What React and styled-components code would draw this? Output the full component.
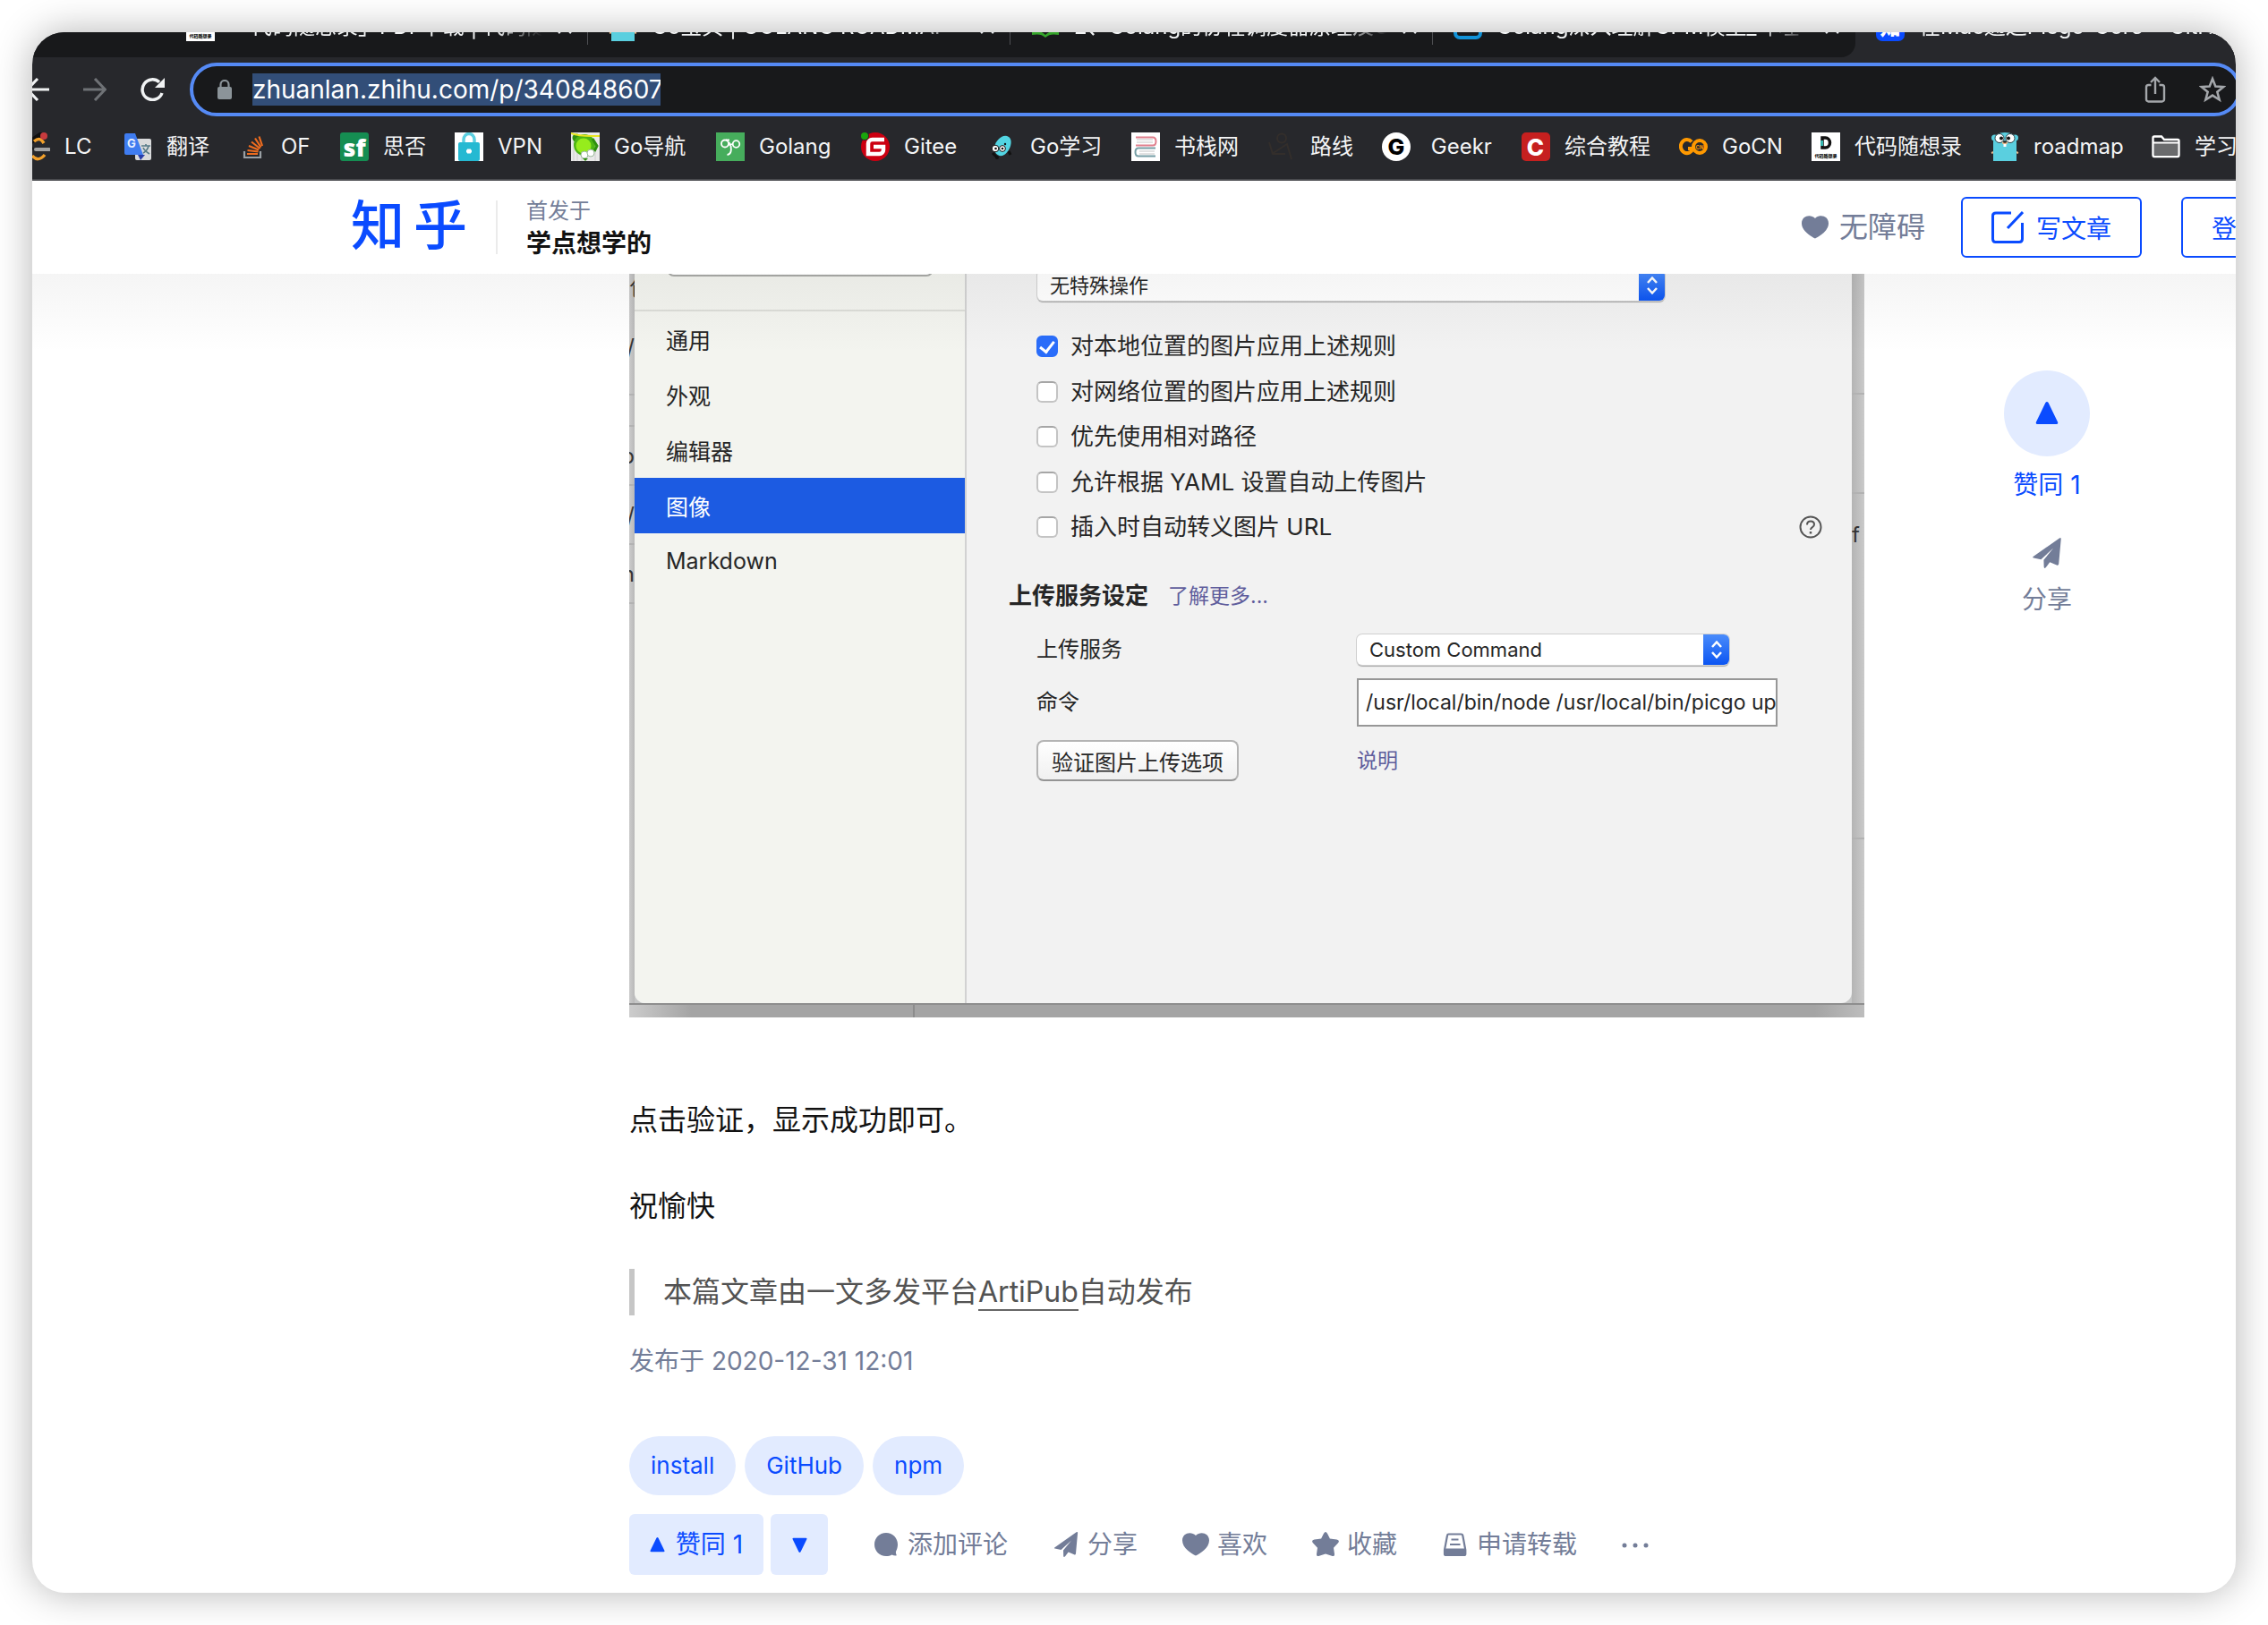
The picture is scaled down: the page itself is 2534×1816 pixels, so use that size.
import React from "react";
import styled, { createGlobalStyle, css } from "styled-components";

const FONT = `Inter, "Noto Sans CJK SC", sans-serif`;
const BLUE = "#0a4bff";
const PALE = "#e2ebff";
const SLATE = "#737d98";

const GlobalStyle = createGlobalStyle`
  * { box-sizing: border-box; }
  body { margin: 0; background: #fff; font-family: ${FONT}; color: #121212; }
  button, input, select { font-family: inherit; margin: 0; }
  p, h3, figure, blockquote, ul { margin: 0; padding: 0; }
  svg { display: block; flex: none; }
`;

const bareButton = css`
  border: 0;
  padding: 0;
  background: none;
  color: inherit;
  display: flex;
  align-items: center;
`;

const Page = styled.div`
  padding: 36px;
  min-height: 100vh;
  overflow: hidden;
`;

const Window = styled.div`
  min-height: calc(100vh - 72px);
  border-radius: 36px;
  overflow: hidden;
  background: #fff;
  box-shadow: 0 0 44px rgba(0, 0, 0, 0.3);
`;

/* ---------- browser chrome ---------- */

const Chrome = styled.div`
  background: #27282c;
  border-bottom: 2px solid #4a4b4f;
`;

const TabStrip = styled.div`
  display: flex;
  align-items: flex-end;
  height: 28px;
  padding-left: 149px;
  overflow: hidden;
  background: linear-gradient(90deg, #18191b 80%, #27282c 80%);
`;

const Tab = styled.div`
  flex: none;
  display: flex;
  align-items: center;
  gap: 16px;
  width: 472px;
  height: 68px;
  padding: 0 22px 0 23px;
  background: ${(p) => (p.$active ? "#27282c" : "#18191b")};
  border-bottom-right-radius: ${(p) => (p.$last ? "16px" : "0")};
`;

const TabTitle = styled.span`
  flex: 1;
  min-width: 0;
  overflow: hidden;
  white-space: nowrap;
  font-size: 24px;
  line-height: 32px;
  color: #f1f3f4;
  -webkit-mask-image: linear-gradient(90deg, #000 85%, transparent 100%);
  mask-image: linear-gradient(90deg, #000 85%, transparent 100%);
`;

const TabRule = styled.span`
  flex: none;
  width: 2px;
  height: 40px;
  margin-right: -23px;
  background: ${(p) => (p.$hidden ? "transparent" : "#4d4e52")};
`;

const Toolbar = styled.div`
  display: flex;
  align-items: center;
  height: 66px;
  padding: 6px 0 0 57px;
  margin-right: -6px;
`;

const NavButton = styled.button`
  ${bareButton}
  flex: none;
  width: 26px;
  margin-right: ${(p) => p.$after || 0}px;
  color: ${(p) => (p.$dim ? "#6f7276" : "#f1f3f4")};
`;

const BackButton = styled(NavButton)`
  margin-left: -64px;
  margin-right: 38px;
`;

const Omnibox = styled.div`
  flex: 1;
  display: flex;
  align-items: center;
  height: 60px;
  border: 4px solid #558af5;
  border-radius: 30px;
  background: #18191b;
  padding: 0 13px 0 26px;
  color: #a4a7ab;
`;

const UrlInput = styled.input`
  width: 456px;
  height: 36px;
  margin: 0 auto 0 22px;
  border: 0;
  padding: 0;
  outline: 0;
  background: #324e78;
  color: #fff;
  font-size: 28px;
  line-height: 36px;
`;

const OmniButton = styled.button`
  ${bareButton}
  margin-left: 37px;
`;

const Bookmarks = styled.nav`
  display: flex;
  gap: 32px;
  height: 70px;
  margin-left: -12px;
  padding-top: 18px;
  overflow: hidden;
`;

const Bookmark = styled.a`
  flex: none;
  display: flex;
  gap: 16px;
  height: 32px;
  width: ${(p) => p.$w}px;
  color: #f4f5f6;
  font-size: 24px;
  line-height: 32px;
  white-space: pre;
  text-decoration: none;
`;

/* ---------- site header ---------- */

const SiteHeader = styled.header`
  position: relative;
  display: flex;
  align-items: center;
  height: 104px;
  padding-left: 356px;
  background: #fff;
  white-space: nowrap;

  &::after {
    content: "";
    position: absolute;
    z-index: 2;
    left: 0;
    right: 0;
    top: 104px;
    height: 88px;
    background: linear-gradient(rgba(18, 18, 18, 0.045), rgba(18, 18, 18, 0));
    pointer-events: none;
  }
`;

const Logo = styled.a`
  display: flex;
  gap: 10px;
  padding-bottom: 12px;
  color: ${BLUE};
  font-family: "Noto Sans CJK SC", sans-serif;
  font-size: 60px;
  font-weight: 500;
  line-height: 80px;
  text-decoration: none;
`;

const Column = styled.div`
  margin-left: 32px;
  padding-left: 32px;
  border-left: 2px solid #ebebeb;
  height: 60px;
  display: flex;
  flex-direction: column;
  justify-content: center;
`;

const ColumnNote = styled.span`
  font-size: 24px;
  line-height: 36px;
  color: ${SLATE};
`;

const ColumnName = styled.a`
  font-size: 28px;
  font-weight: 700;
  line-height: 36px;
  color: #121212;
  text-decoration: none;
`;

const HeaderActions = styled.div`
  display: flex;
  align-items: center;
  margin-left: auto;
  margin-right: -136px;
`;

const AccessLink = styled.a`
  display: flex;
  align-items: center;
  gap: 12px;
  margin-right: 40px;
  font-size: 32px;
  line-height: 48px;
  color: ${SLATE};
  text-decoration: none;
`;

const OutlineButton = styled.button`
  ${bareButton}
  gap: 14px;
  height: 68px;
  padding: 0 32px;
  margin-right: ${(p) => p.$after || 0}px;
  border: 2px solid ${BLUE};
  border-radius: 6px;
  color: ${BLUE};
  font-size: 28px;
  width: ${(p) => p.$w}px;
`;

/* ---------- article ---------- */

const Body = styled.main`
  display: flex;
  align-items: flex-start;
  padding: 0 0 20px 667px;
`;

const Article = styled.article`
  flex: 0 1 1380px;
  min-width: 0;
`;

const Shot = styled.figure`
  display: grid;
  grid-template-columns: 6px 1fr 14px;
  grid-template-rows: 815px 16px;
  background: #c6c7c7;
  margin-bottom: 89px;
`;

const Strip = styled.div`
  display: flex;
  flex-direction: column;
  overflow: hidden;
  font-size: 24px;
  white-space: nowrap;
  color: #333;
  background: linear-gradient(90deg, ${(p) => (p.$right ? "#b4b4b4, #cacaca" : "#cbcbcb, #b9b9b9")});
`;

const StripCell = styled.span`
  flex: none;
  display: flex;
  align-items: center;
  justify-content: ${(p) => (p.$end ? "flex-end" : "flex-start")};
  height: ${(p) => p.$h}px;
  border-bottom: ${(p) => (p.$line ? "2px solid #b2b2b2" : "0")};
`;

const ShotFoot = styled.div`
  grid-column: 1 / -1;
  display: flex;
  background: linear-gradient(90deg, #cccccc, #a4a4a4 5%, #a4a4a4 96%, #bdbdbd);
  border-top: 2px solid #8e8e8e;

  &::before {
    content: "";
    width: 2px;
    margin-left: 317px;
    background: #8c8c8c;
  }
`;

const Dialog = styled.section`
  display: flex;
  overflow: hidden;
  border-radius: 0 0 12px 12px;
  background: #f2f2f2;
  color: #262626;
`;

const Sidebar = styled.div`
  flex: none;
  width: 371px;
  background: #f3f4ef;
  border-right: 2px solid #d2d2d2;
`;

const SearchArea = styled.div`
  display: flex;
  align-items: flex-end;
  height: 42px;
  padding: 0 36px 37px;
  border-bottom: 2px solid #dcddd8;
`;

const SearchInput = styled.input`
  flex: none;
  width: 298px;
  height: 40px;
  border: 2px solid #a9aaa7;
  border-radius: 8px;
  background: #fff;
`;

const MenuItem = styled.button`
  ${bareButton}
  width: 100%;
  height: 62px;
  padding-left: 35px;
  font-size: 25px;
  background: ${(p) => (p.$on ? "#1c5be2" : "transparent")};
  color: ${(p) => (p.$on ? "#fff" : "#262626")};
`;

const Panel = styled.div`
  flex: 1;
  min-width: 0;
  padding-left: 47px;
`;

const SelectBox = styled.div`
  display: flex;
  width: ${(p) => p.$w}px;
  height: 34px;
  border-radius: 6px;
  overflow: hidden;
  background: #fff;
  box-shadow: 0 0 0 1px #d0d0d0, 0 2px 1px #a8a8a8;
`;

const FirstSelect = styled(SelectBox)`
  margin: -4px 0 33px 32px;
`;

const NativeSelect = styled.select`
  appearance: none;
  flex: 1;
  min-width: 0;
  border: 0;
  padding: 0 14px;
  background: transparent;
  color: #262626;
  font-size: 22px;
  line-height: 34px;
`;

const Stepper = styled.span`
  flex: none;
  display: flex;
  align-items: center;
  justify-content: center;
  width: 29px;
  color: #fff;
  background: linear-gradient(#4a8cfb, #0c55f2);
`;

const Options = styled.div`
  display: flex;
  flex-direction: column;
  justify-content: space-between;
  height: 238px;
  margin: 0 33px 41px 31px;
`;

const OptionRow = styled.div`
  display: flex;
  align-items: center;
  height: 36px;
  font-size: 26px;
  line-height: 36px;

  svg { margin-left: auto; }
`;

const Check = styled.input`
  appearance: none;
  display: flex;
  justify-content: center;
  width: 24px;
  height: 24px;
  margin-right: 14px;
  border: 2px solid #c4c4c4;
  border-top-color: #a6a6a6;
  border-radius: 6px;
  background: #fff;

  &:checked { background: #2a6dfa; border-color: #2a6dfa; }
  &:checked::after {
    content: "";
    width: 7px;
    height: 13px;
    margin-top: 1px;
    border: solid #fff;
    border-width: 0 3px 3px 0;
    transform: rotate(38deg);
  }
`;

const SectionHead = styled.div`
  display: flex;
  align-items: center;
  gap: 22px;
  height: 36px;
  margin-bottom: 25px;
`;

const SectionTitle = styled.h3`
  font-size: 26px;
  line-height: 36px;
  font-weight: 700;
`;

const TextLink = styled.a`
  color: #5f5d9c;
  font-size: 23px;
  line-height: 36px;
  text-decoration: none;
`;

const Fields = styled.div`
  display: grid;
  grid-template-columns: 358px auto;
  row-gap: 15px;
  align-items: center;
  justify-content: start;
  margin-left: 31px;
  font-size: 24px;
`;

const FieldLabel = styled.label`
  line-height: 32px;
`;

const CommandInput = styled.input`
  width: 470px;
  height: 54px;
  padding: 0 0 0 8px;
  border: 2px solid #979797;
  background: #fff;
  color: #262626;
  font-size: 23px;
`;

const VerifyButton = styled.button`
  justify-self: start;
  height: 46px;
  padding: 0 15px;
  border: 2px solid #b4b4b4;
  border-bottom-color: #949494;
  border-radius: 8px;
  background: linear-gradient(#fff, #f0f0f0);
  color: #262626;
  font-size: 24px;
`;

const Para = styled.p`
  margin-bottom: 44px;
  font-size: 32px;
  line-height: 52px;
`;

const Quote = styled.blockquote`
  margin-bottom: 32px;
  padding-left: 32px;
  border-left: 6px solid #c6c6c6;
  color: #535353;
  font-size: 32px;
  line-height: 52px;

  a {
    color: inherit;
    text-decoration: none;
    border-bottom: 2px solid #666;
  }
`;

const PublishDate = styled.p`
  margin-bottom: 65px;
  color: ${SLATE};
  font-size: 28px;
  line-height: 38px;
`;

const Tags = styled.div`
  display: flex;
  gap: 10px;
  margin-bottom: 21px;
`;

const Tag = styled.a`
  padding: 0 24px;
  border-radius: 33px;
  background: ${PALE};
  color: ${BLUE};
  font-size: 26px;
  line-height: 66px;
  text-decoration: none;
`;

const Actions = styled.div`
  display: flex;
  align-items: center;
  gap: 50px;
  height: 68px;
  white-space: nowrap;
`;

const Votes = styled.div`
  display: flex;
  gap: 8px;
`;

const VoteButton = styled.button`
  ${bareButton}
  justify-content: center;
  gap: 12px;
  width: ${(p) => p.$w}px;
  height: 68px;
  border-radius: 6px;
  background: ${PALE};
  color: ${BLUE};
  font-size: 28px;
  line-height: 40px;
`;

const ActionButton = styled.button`
  ${bareButton}
  gap: 9px;
  color: ${SLATE};
  font-size: 28px;
  line-height: 40px;
`;

const SideBar = styled.aside`
  flex: none;
  display: flex;
  flex-direction: column;
  align-items: center;
  gap: 38px;
  margin-left: 144px;
  padding-top: 108px;
  width: 120px;
`;

const SideButton = styled.button`
  ${bareButton}
  flex-direction: column;
  gap: ${(p) => p.$gap}px;
  color: ${(p) => (p.$accent ? BLUE : SLATE)};
  font-size: 28px;
  line-height: 40px;
`;

const Round = styled.span`
  display: flex;
  align-items: center;
  justify-content: center;
  width: 96px;
  height: 96px;
  border-radius: 50%;
  background: ${PALE};
`;

/* ---------- icons ---------- */

const Svg = ({ s = 32, w, h, vb = "0 0 32 32", children, ...rest }) => (
  <svg width={w || s} height={h || s} viewBox={vb} fill="none" aria-hidden="true" {...rest}>
    {children}
  </svg>
);

const ArrowIcon = ({ back }) => (
  <Svg s={26} vb="0 0 26 26" stroke="currentColor" strokeWidth="3">
    {back ? <path d="M26 13H2M13 1L1.500 13L13 25" /> : <path d="M0 13H24M13 1L24.500 13L13 25" />}
  </Svg>
);

const ReloadIcon = () => (
  <Svg w={28} h={26} vb="0 0 28 26">
    <path d="M24 17A11.300 11.300 0 1 1 21 4.800" stroke="currentColor" strokeWidth="3.500" />
    <path d="M27 0V11H16Z" fill="currentColor" />
  </Svg>
);

const LockIcon = () => (
  <Svg w={18} h={22} vb="0 0 18 22">
    <rect x="1" y="8" width="16" height="14" rx="2" fill="#8b9499" />
    <path d="M4.500 9V5.500a4.500 4.500 0 0 1 9 0V9" stroke="#8b9499" strokeWidth="2.200" />
  </Svg>
);

const ShareBoxIcon = () => (
  <Svg w={24} h={30} vb="0 0 24 30" stroke="currentColor" strokeWidth="2.400">
    <path d="M7.500 10H4.500a2.500 2.500 0 0 0-2.500 2.500V26a2.500 2.500 0 0 0 2.500 2.500h15A2.500 2.500 0 0 0 22 26V12.500a2.500 2.500 0 0 0-2.500-2.500h-3M12 20V2.500M7 7l5-5 5 5" />
  </Svg>
);

const StarOutline = () => (
  <Svg s={30} vb="0 0 30 30">
    <path d="M15 3l3.300 8.500 9 .5-7 5.700 2.400 8.800L15 21.600 7.300 26.500l2.400-8.800-7-5.700 9-.5z" stroke="currentColor" strokeWidth="2.500" />
  </Svg>
);

const CloseIcon = () => (
  <Svg s={18} vb="0 0 18 18" stroke="#e8eaed" strokeWidth="2.500">
    <path d="M2 2l14 14M16 2L2 16" />
  </Svg>
);

const Gopher = () => (
  <Svg>
    <path d="M1 23l5-2M31 23l-5-2" stroke="#e9b98a" strokeWidth="2" />
    <circle cx="4.500" cy="6" r="3.500" fill="#5acfdf" />
    <circle cx="27.500" cy="6" r="3.500" fill="#5acfdf" />
    <path d="M3 32V11C3 3 9 0 16 0s13 3 13 11v21z" fill="#5acfdf" />
    <circle cx="10" cy="6.500" r="5" fill="#fff" stroke="#2b3f45" />
    <circle cx="22" cy="6.500" r="5" fill="#fff" stroke="#2b3f45" />
    <circle cx="12" cy="6.500" r="2" fill="#111" />
    <circle cx="20" cy="6.500" r="2" fill="#111" />
    <ellipse cx="16" cy="11.500" rx="3" ry="2" fill="#e9b98a" />
    <path d="M14.500 13h3v3h-3z" fill="#fff" />
    <ellipse cx="16" cy="10.500" rx="2" ry="1.200" fill="#222" />
  </Svg>
);

const iconText = { fontFamily: "Inter, sans-serif", fontWeight: 700 };
const cjkText = { fontFamily: '"Noto Sans CJK SC", sans-serif', fontWeight: 900 };

const CodeCard = () => (
  <Svg>
    <path fill="#fff" d="M0 0h32v32H0z" />
    <path d="M12 6h3.500a5 5.500 0 0 1 0 11H12z" stroke="#111" strokeWidth="3.500" />
    <path d="M10 9h3v6h-3z" fill="#35b6b0" />
    <text x="16" y="28" fontSize="5" textAnchor="middle" fill="#111" style={cjkText}>代码随想录</text>
  </Svg>
);

const LeetCode = () => (
  <Svg>
    <path d="M12 20L5 14 24 1" stroke="#101010" strokeWidth="6" />
    <path d="M14 10c5-4 8-3 11 2M12 26c4 5 9 5 14-1" stroke="#f2a02b" strokeWidth="3.500" />
    <path d="M16 19h15" stroke="#a3a3a3" strokeWidth="4" strokeLinecap="round" />
    <circle cx="25" cy="4" r="4" fill="#c73b3e" />
  </Svg>
);

const Translate = () => (
  <Svg>
    <rect x="13" y="7" width="18" height="24" rx="2" fill="#d9dadb" />
    <path d="M16 25h8l-5 6z" fill="#2a3ea8" />
    <path d="M1 3a2 2 0 0 1 2-2h10l9 24H3a2 2 0 0 1-2-2z" fill="#3f7cf0" />
    <text x="4" y="17" fontSize="13" fill="#e8f0ff" style={iconText}>G</text>
    <path d="M20 15h10M25 13v2M28 15c-1 4-4 7-6 8M22 17c1 3 4 5 7 7" stroke="#557a86" strokeWidth="1.600" />
  </Svg>
);

const StackIcon = () => (
  <Svg>
    <path d="M7 21v7h18v-7" stroke="#9aa0a5" strokeWidth="2.200" />
    <path d="M10 24h12M10.500 20l12 1.500M12 15l11 4.500M15 10.500l9.500 7.500M19 6.500l6.500 10M23.500 4.500L27 15" stroke="#ee6c1f" strokeWidth="2.200" />
  </Svg>
);

const SfIcon = () => (
  <Svg>
    <rect width="32" height="32" rx="3" fill="#158d52" />
    <text x="16" y="27" fontSize="27" textAnchor="middle" fill="#fff" style={{ fontFamily: '"Open Sans", sans-serif', fontWeight: 800 }}>sf</text>
  </Svg>
);

const VpnIcon = () => (
  <Svg>
    <path fill="#fff" d="M0 0h32v32H0z" />
    <path d="M10 12V8a6 6.500 0 0 1 12 0v4" stroke="#5ccfe0" strokeWidth="3.500" />
    <rect x="4" y="11" width="24" height="21" rx="2" fill="#25b9d2" />
    <path d="M14 18.500h4v5h-4zM13 19.500h6v3h-6z" fill="#fff" />
  </Svg>
);

const FrogIcon = () => (
  <Svg>
    <path fill="#e9e9e9" d="M0 0h32v32H0z" />
    <path d="M7 18v14M12 18v14M27 18v14M3 10v22" stroke="#cfcfcf" />
    <circle cx="6" cy="6" r="4.500" fill="#2f8f10" />
    <circle cx="15" cy="14" r="12" fill="#4db514" />
    <circle cx="14" cy="15" r="8.500" fill="#96ec1c" />
    <path d="M0 1c10 4 20 3 32 3" stroke="#e8e51f" strokeWidth="2" />
    <path d="M24 7l5 8-3 6" stroke="#2f8f10" strokeWidth="3" />
    <circle cx="15" cy="25" r="4" fill="#fff" stroke="#9bb89b" />
    <circle cx="22" cy="23" r="4" fill="#fff" stroke="#9bb89b" />
    <path d="M13 29h6l-3 3z" fill="#2f8f10" />
  </Svg>
);

const GoGreen = () => (
  <Svg>
    <path fill="#46ad5c" d="M0 0h32v32H0z" />
    <circle cx="10" cy="12.500" r="4" stroke="#fff" strokeWidth="1.800" />
    <circle cx="22.500" cy="13" r="3.800" stroke="#fff" strokeWidth="1.800" />
    <path d="M11 8.500h4M14.500 11c3 4 4 13-2 14M14 14l4-1" stroke="#fff" strokeWidth="1.800" />
  </Svg>
);

const GiteeIcon = () => (
  <Svg>
    <circle cx="16" cy="16" r="16" fill="#cc0011" />
    <path d="M26 8H12.500a4.500 4.500 0 0 0-4.500 4.500V24h12.500a4.500 4.500 0 0 0 4.500-4.500V16H14" stroke="#fff" strokeWidth="4.500" />
    <circle cx="4" cy="4" r="5" fill="#27282c" />
    <circle cx="4" cy="4" r="4" fill="#1aa50d" />
  </Svg>
);

const GopherBlob = () => (
  <Svg>
    <path d="M8 16C10 8 18 1 24 5c6 4 1 18-7 21-6 1-10-4-9-10z" fill="#52d5e3" />
    <circle cx="9" cy="18" r="3.800" fill="#fff" stroke="#111" />
    <circle cx="17" cy="18" r="3.400" fill="#fff" stroke="#111" />
    <circle cx="9.500" cy="18" r="1.300" fill="#111" />
    <circle cx="17" cy="18" r="1.300" fill="#111" />
    <circle cx="20" cy="13" r="1.200" fill="#111" />
    <path d="M6 23l5 5M24 21l2 4" stroke="#111" strokeWidth="3" />
    <circle cx="11" cy="28" r="2" fill="#111" />
  </Svg>
);

const BooksIcon = () => (
  <Svg>
    <path fill="#fff" d="M0 0h32v32H0z" />
    <path d="M6 8h18M6 11h18M9 21h17M9 24h17" stroke="#e2e2e2" strokeWidth="2" />
    <path d="M5 5.500h19q3.500 0 3.500 4.500t-3.500 4.500H5" stroke="#e0808d" strokeWidth="2" />
    <path d="M27 17.500H8q-3.500 0-3.500 4.500T8 26.500h19" stroke="#769ea5" strokeWidth="2" />
  </Svg>
);

const RouteIcon = () => (
  <Svg stroke="#332e2b" strokeWidth="2">
    <circle cx="16" cy="6.500" r="5" />
    <path d="M2 11l4 13h14M5 24l17-11 5 17" />
  </Svg>
);

const LetterDisc = () => (
  <Svg>
    <circle cx="16" cy="16" r="16" fill="#fff" />
    <text x="16" y="25" fontSize="25" textAnchor="middle" fill="#000" style={{ ...iconText, fontWeight: 800 }}>G</text>
  </Svg>
);

const LetterSquare = () => (
  <Svg>
    <rect width="32" height="32" rx="5" fill="#c6201f" />
    <text x="15.500" y="25.500" fontSize="26" textAnchor="middle" fill="#fff" style={{ ...iconText, fontWeight: 800 }}>C</text>
  </Svg>
);

const GoCnIcon = () => (
  <Svg>
    <path d="M14 10.500A7 7.500 0 1 0 15.500 18H10" stroke="#f90" strokeWidth="4" />
    <circle cx="23" cy="16" r="7" stroke="#f90" strokeWidth="4" />
    <text x="23" y="18.500" fontSize="6" textAnchor="middle" fill="#f90" style={iconText}>CN</text>
  </Svg>
);

const FolderIcon = () => (
  <Svg>
    <path d="M1.500 25V6q0-1.500 1.500-1.500h8l3 3.500h15q1.500 0 1.500 1.500V25q0 2-1.500 2H3q-1.500 0-1.500-2z" stroke="#fff" strokeWidth="2.400" />
    <path d="M3 12h26v13H3z" fill="#6a6b6d" />
    <path d="M2 11.500h28" stroke="#fff" strokeWidth="2" />
  </Svg>
);

const GreenBook = () => (
  <Svg>
    <path d="M1 21c6-1 11 0 15 4 4-4 9-5 15-4v4c-6-1-11-1-15 3-4-4-9-4-15-3z" fill="#35a52b" />
  </Svg>
);

const TvIcon = () => (
  <Svg>
    <rect x="2" y="6" width="28" height="22" rx="5" stroke="#1293d8" strokeWidth="4" />
  </Svg>
);

const ZhiIcon = () => (
  <Svg>
    <rect width="32" height="32" rx="7" fill="#0a4bff" />
    <text x="16" y="25" fontSize="23" textAnchor="middle" fill="#fff" style={cjkText}>知</text>
  </Svg>
);

const HeartIcon = ({ s = 30 }) => (
  <Svg s={s} vb="0 0 30 30">
    <path d="M15 27.500C10 25 0 19 0 10.500 0 2 10 0 15 5c5-5 15-3 15 5.500C30 19 20 25 15 27.500z" fill="currentColor" />
  </Svg>
);

const StarIcon = () => (
  <Svg s={30} vb="0 0 30 30">
    <path d="M13 2.800q2-3.600 4 0l2.900 5.700 7.600 1.100q3.800.8 1.600 3.600L24 18.800l1 7q.2 3-3 2L15 25.500 8 27.800q-3.200 1-3-2l1-7-5.100-5.600q-2.200-2.800 1.600-3.600l7.600-1.100z" fill="currentColor" />
  </Svg>
);

const CommentIcon = () => (
  <Svg s={30} vb="0 0 30 30">
    <path d="M15 2C7.500 2 2 7.700 2 15s5.500 13 13 13c2.500 0 4.600-.6 6.500-1.600 1.600.9 3.600 1.200 5.500.9-.9-1.500-1.300-3-1-4.600 1.300-2.200 2-4.800 2-7.700C28 7.700 22.500 2 15 2z" fill="currentColor" />
  </Svg>
);

const PlaneIcon = ({ s = 30 }) => (
  <Svg s={s} vb="0 0 30 30">
    <path d="M2.200 18.400L26.600 1.200q1.600-.9 1.500.9L26 25.300q-.3 1.700-1.900 1l-6.400-2.800-3.800 5.100q-1.500 1.200-1.700-.6l-.2-6.500L21 10.500 9.500 21l-6.900-1.400q-1.200-.4-.4-1.200z" fill="currentColor" />
  </Svg>
);

const RequestIcon = () => (
  <Svg s={30} vb="0 0 30 30">
    <path d="M7.500 3.500h14q1.500 0 1.800 1.500l3 16v4.500q0 1.500-1.500 1.500H4.500Q3 27 3 25.500V21L6 5q.2-1.500 1.500-1.500z" stroke="currentColor" strokeWidth="2.200" />
    <path d="M3 19.500h23.300V27H3z" fill="currentColor" />
    <path d="M10.500 9.500h8M9 15h11.500" stroke="currentColor" strokeWidth="2" />
  </Svg>
);

const DotsIcon = () => (
  <Svg s={30} vb="0 0 30 30">
    <circle cx="3" cy="16" r="2.500" fill="currentColor" />
    <circle cx="15" cy="16" r="2.500" fill="currentColor" />
    <circle cx="27" cy="16" r="2.500" fill="currentColor" />
  </Svg>
);

const Triangle = ({ s = 17, down }) => (
  <Svg s={s} vb="0 0 26 26">
    <path
      d={down ? "M11.400 25L1 3.500Q0 1 2.500 1h21Q26 1 25 3.500L14.600 25q-1.600 2-3.200 0z" : "M11.400 1L1 22.500Q0 25 2.500 25h21q2.500 0 1.500-2.500L14.600 1q-1.600-2-3.200 0z"}
      fill="currentColor"
    />
  </Svg>
);

const WriteIcon = () => (
  <Svg s={36} vb="0 0 36 36" stroke="currentColor" strokeWidth="3">
    <path d="M22 2H5Q1.500 2 1.500 5v26q0 3.500 3 3.500H31q3.500 0 3.500-3.500V13M35 1L18 19" />
  </Svg>
);

const HelpIcon = () => (
  <Svg s={26} vb="0 0 26 26" stroke="#555" strokeWidth="2">
    <circle cx="13" cy="13" r="11.500" />
    <path d="M9 10.500Q9 6.500 13 6.500t4 3.500q0 2-2 3.200T13 16" />
    <path d="M13 18v2.500" strokeWidth="2.500" />
  </Svg>
);

const UpDown = () => (
  <Svg w={16} h={22} vb="0 0 16 22" stroke="currentColor" strokeWidth="2.500">
    <path d="M3 8l5-5.500L13 8M3 14l5 5.500 5-5.500" />
  </Svg>
);

/* ---------- data ---------- */

const TABS = [
  { title: "「代码随想录」PDF下载 | 代码随想录算法", Icon: CodeCard },
  { title: "Go宝典 | GOLANG ROADMAP", Icon: Gopher },
  { title: "2、Golang的协程调度器原理及GMP", Icon: GreenBook },
  { title: "Golang深入理解GPM模型_哔哩哔哩", Icon: TvIcon },
  { title: "在Mac通过Picgo-Core + GitHub", Icon: ZhiIcon, active: true },
];

const BOOKMARKS = [
  ["LC", LeetCode, 82],
  ["翻译", Translate, 96],
  ["OF", StackIcon, 82],
  ["思否", SfIcon, 96],
  ["VPN", VpnIcon, 98],
  ["Go导航", FrogIcon, 130],
  ["Golang", GoGreen, 130],
  ["Gitee", GiteeIcon, 109],
  ["Go学习", GopherBlob, 129],
  ["书栈网", BooksIcon, 120],
  ["路线", RouteIcon, 96],
  [" Geekr", LetterDisc, 124],
  ["综合教程", LetterSquare, 144],
  ["GoCN", GoCnIcon, 116],
  ["代码随想录", CodeCard, 168],
  ["roadmap", Gopher, 148],
  ["学习", FolderIcon, 96],
];

const MENU = ["通用", "外观", "编辑器", "图像", "Markdown"];

const OPTIONS = [
  "对本地位置的图片应用上述规则",
  "对网络位置的图片应用上述规则",
  "优先使用相对路径",
  "允许根据 YAML 设置自动上传图片",
  "插入时自动转义图片 URL",
];

export default function App() {
  return (
    <Page>
      <GlobalStyle />
      <Window>
        <Chrome>
          <TabStrip>
            {TABS.map(({ title, Icon, active }, i) => (
              <Tab key={title} $active={active} $last={i === 3}>
                <Icon />
                <TabTitle>{title}</TabTitle>
                {!active && <CloseIcon />}
                {!active && <TabRule $hidden={i === 3} />}
              </Tab>
            ))}
          </TabStrip>
          <Toolbar>
            <BackButton aria-label="Back"><ArrowIcon back /></BackButton>
            <NavButton aria-label="Forward" $dim $after={38}><ArrowIcon /></NavButton>
            <NavButton aria-label="Reload" $after={29}><ReloadIcon /></NavButton>
            <Omnibox>
              <LockIcon />
              <UrlInput aria-label="Address" defaultValue="zhuanlan.zhihu.com/p/340848607" />
              <OmniButton aria-label="Share"><ShareBoxIcon /></OmniButton>
              <OmniButton aria-label="Bookmark this page"><StarOutline /></OmniButton>
            </Omnibox>
          </Toolbar>
          <Bookmarks>
            {BOOKMARKS.map(([name, Icon, w]) => (
              <Bookmark key={name} href="#" $w={w}>
                <Icon />
                {name}
              </Bookmark>
            ))}
          </Bookmarks>
        </Chrome>

        <SiteHeader>
          <Logo href="#"><span>知</span><span>乎</span></Logo>
          <Column>
            <ColumnNote>首发于</ColumnNote>
            <ColumnName href="#">学点想学的</ColumnName>
          </Column>
          <HeaderActions>
            <AccessLink href="#"><HeartIcon />无障碍</AccessLink>
            <OutlineButton $w={202} $after={44}><WriteIcon />写文章</OutlineButton>
            <OutlineButton $w={197}>登录/注册</OutlineButton>
          </HeaderActions>
        </SiteHeader>

        <Body>
          <Article>
            <Shot>
              <Strip>
                <StripCell $h={28}>包</StripCell>
                <StripCell $h={108} $line $end>/</StripCell>
                <StripCell $h={35} $line />
                <StripCell $h={66} $line $end>p</StripCell>
                <StripCell $h={66} $line $end>/</StripCell>
                <StripCell $h={66} $line $end>n</StripCell>
              </Strip>
              <Dialog>
                <Sidebar>
                  <SearchArea>
                    <SearchInput type="search" aria-label="搜索" />
                  </SearchArea>
                  {MENU.map((m) => (
                    <MenuItem key={m} $on={m === "图像"}>{m}</MenuItem>
                  ))}
                </Sidebar>
                <Panel>
                  <FirstSelect $w={701}>
                    <NativeSelect aria-label="插入图片时">
                      <option>无特殊操作</option>
                    </NativeSelect>
                    <Stepper><UpDown /></Stepper>
                  </FirstSelect>
                  <Options>
                    {OPTIONS.map((o, i) => (
                      <OptionRow key={o}>
                        <Check type="checkbox" id={`opt-${i}`} defaultChecked={i === 0} />
                        <label htmlFor={`opt-${i}`}>{o}</label>
                        {i === 4 && <HelpIcon />}
                      </OptionRow>
                    ))}
                  </Options>
                  <SectionHead>
                    <SectionTitle>上传服务设定</SectionTitle>
                    <TextLink href="#">了解更多...</TextLink>
                  </SectionHead>
                  <Fields>
                    <FieldLabel htmlFor="service">上传服务</FieldLabel>
                    <SelectBox $w={416}>
                      <NativeSelect id="service">
                        <option>Custom Command</option>
                      </NativeSelect>
                      <Stepper><UpDown /></Stepper>
                    </SelectBox>
                    <FieldLabel htmlFor="command">命令</FieldLabel>
                    <CommandInput id="command" defaultValue="/usr/local/bin/node /usr/local/bin/picgo up" />
                    <VerifyButton>验证图片上传选项</VerifyButton>
                    <TextLink href="#">说明</TextLink>
                  </Fields>
                </Panel>
              </Dialog>
              <Strip $right>
                <StripCell $h={135} $line />
                <StripCell $h={111} $line />
                <StripCell $h={90}>f c</StripCell>
                <StripCell $h={296} $line />
              </Strip>
              <ShotFoot />
            </Shot>

            <Para>点击验证，显示成功即可。</Para>
            <Para>祝愉快</Para>
            <Quote>本篇文章由一文多发平台<a href="#">ArtiPub</a>自动发布</Quote>
            <PublishDate>发布于 2020-12-31 12:01</PublishDate>
            <Tags>
              <Tag href="#">install</Tag>
              <Tag href="#">GitHub</Tag>
              <Tag href="#">npm</Tag>
            </Tags>
            <Actions>
              <Votes>
                <VoteButton $w={150}><Triangle />赞同 1</VoteButton>
                <VoteButton $w={64} aria-label="反对"><Triangle down /></VoteButton>
              </Votes>
              <ActionButton><CommentIcon />添加评论</ActionButton>
              <ActionButton><PlaneIcon />分享</ActionButton>
              <ActionButton><HeartIcon />喜欢</ActionButton>
              <ActionButton><StarIcon />收藏</ActionButton>
              <ActionButton><RequestIcon />申请转载</ActionButton>
              <ActionButton aria-label="更多"><DotsIcon /></ActionButton>
            </Actions>
          </Article>
          <SideBar>
            <SideButton $accent $gap={12}>
              <Round><Triangle s={26} /></Round>
              赞同 1
            </SideButton>
            <SideButton $gap={14}>
              <PlaneIcon s={36} />
              分享
            </SideButton>
          </SideBar>
        </Body>
      </Window>
    </Page>
  );
}
